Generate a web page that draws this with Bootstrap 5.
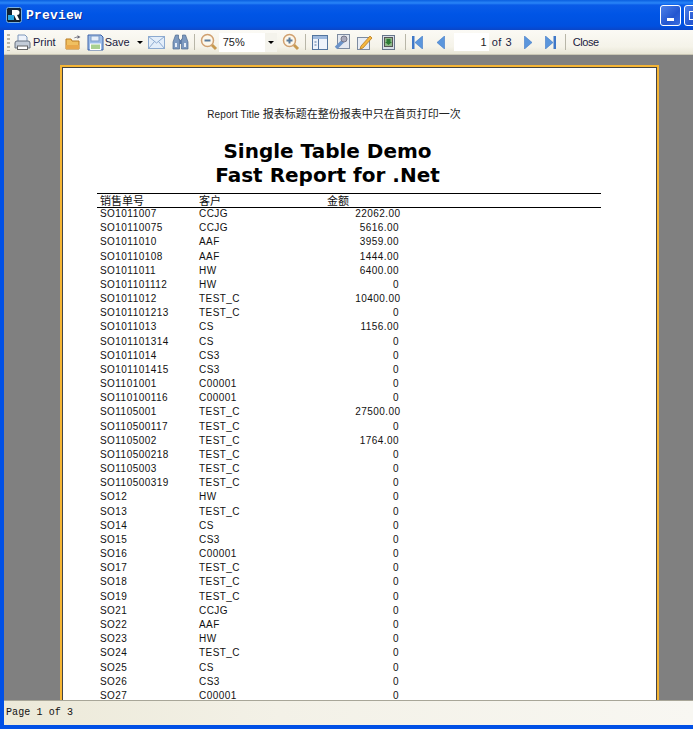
<!DOCTYPE html>
<html lang="en"><head><meta charset="utf-8"><title>Preview</title>
<link rel="stylesheet" href="https://cdn.jsdelivr.net/npm/bootstrap@5.3.0/dist/css/bootstrap.min.css">
<style>
html,body{height:100%;margin:0;overflow:hidden;background:#0047d8}
.win{height:729px;width:693px;display:flex;flex-direction:column;overflow:hidden;background:#0050e6}
.titlebar{height:30px;flex:none;background:linear-gradient(#0a5fe0 0,#2a86f8 3px,#0a5ce8 5px,#0055e6 14px,#0050e0 26px,#0a46c8 30px);padding-left:6px;gap:4px}
.logo{width:16px;height:16px;flex:none}
.wtitle{font:bold 13px "Liberation Mono",monospace;color:#fff;letter-spacing:.2px;text-shadow:1px 1px 0 #0a2a90}
.wbtns{margin-left:auto;gap:3px;margin-right:-12px}
.wbtn{width:21px;height:21px;border:1px solid #fff;border-radius:3px;background:linear-gradient(135deg,#4d80e8,#2356d0 60%,#3a6ee0)}
.frame{flex:1;min-height:0;display:flex;flex-direction:column;margin:0 0 4px 4px}
.tools{height:25px;flex:none;background:linear-gradient(#fbfaf5,#f5f3e9 70%,#e8e5d5);border-bottom:1px solid #c9c6b4;font:11px "Liberation Sans",sans-serif;color:#1a1a40;padding-left:3px}
.grip{width:3px;height:17px;background:repeating-linear-gradient(#b9b6a6 0 2px,transparent 2px 4px);margin-right:4px;flex:none}
.ic{display:block;flex:none}
.sep{width:1px;height:16px;background:#b8b6a8;flex:none}
.zoombox{width:58px;height:19px;background:#fff;padding-left:4px;line-height:19px;color:#222;font-size:11px;position:relative}
.zoombox b{position:absolute;right:0;top:0;bottom:0;width:12px;background:#f4f3ec}
.caret-dn{display:block;width:0;height:0;border:3px solid transparent;border-top:3px solid #000;border-bottom:0;flex:none}
.zoombox .caret-dn{position:absolute;right:3px;top:8px}
.pagebox{width:35px;height:18px;background:#fff;text-align:right;padding-right:2px;line-height:18px;color:#222}
.pagecount{letter-spacing:.5px;width:18px;white-space:nowrap}
.closer{letter-spacing:-.4px}
.g1{margin-left:1px}.g2{margin-left:2px}.g3{margin-left:3px}.g5{margin-left:5px}.g6{margin-left:6px}.g7{margin-left:7px}.g8{margin-left:8px}.g9{margin-left:9px}.g10{margin-left:10px}.g13{margin-left:13px}.g14{margin-left:14px}
.stage{flex:1;min-height:0;background:#808080;overflow:hidden;padding:10px 0 0 56px}
.sheet{width:599px;height:800px;background:#fff;border:2px solid #f5b535;outline:1px solid #444;outline-offset:-3px;padding:40px 56px 0 33px;font:10px/14.18px "Liberation Sans",sans-serif;color:#111;letter-spacing:.45px}
.rtitle{text-align:center;font:11px/14px "Liberation Sans","Noto Sans CJK SC",sans-serif;letter-spacing:0;width:474px;margin-left:2px;color:#222}
.rlatin{font-size:10px;letter-spacing:.1px}
.rhead{text-align:center;font:bold 20px/24px "DejaVu Sans",sans-serif;color:#000;letter-spacing:0;margin-top:17px;width:461px;margin-left:2px}
.hrow{display:flex;width:504px;margin-left:2px;border-top:1px solid #000;border-bottom:1px solid #000;height:15px;margin-top:6px;font:11px/13px "Noto Sans CJK SC",sans-serif;letter-spacing:0;padding-left:3px}
#rows{margin-top:-1px}
.drow{display:flex;width:504px;margin-left:2px;padding-left:3px;height:14.18px}
.c1{width:99px;flex:none}.c2{width:128px;flex:none}
.c3{width:72px;flex:none;text-align:right}
.wide{width:73.500px}
.status{height:25px;flex:none;background:linear-gradient(90deg,#ece9d8,#f3f1e7 40%,#f8f7f2);border-top:1px solid #a8a698;font:10px/24px "Liberation Mono",monospace;letter-spacing:.1px;color:#111;padding-left:2px}
</style></head><body>
<div class="win">
<div class="titlebar d-flex align-items-center">
<svg class="logo" viewBox="0 0 16 16"><rect x=".5" y=".5" width="15" height="15" rx="2" fill="#123" stroke="#7ab0e0"/><path d="M3 3h8q2.500 0 2.500 2.500T11 8l2.500 5H10.500L8 8H6V3z" fill="#fff"/><rect x="2" y="8" width="6" height="5" fill="#2aa5e0"/></svg>
<span class="wtitle">Preview</span>
<div class="wbtns d-flex"><span class="wbtn d-flex align-items-end justify-content-center pb-1"><svg width="8" height="3"><rect width="7" height="3" fill="#fff"/></svg></span><span class="wbtn d-flex align-items-center justify-content-center"><svg width="11" height="11"><rect x=".5" y="1.500" width="9" height="8" fill="none" stroke="#fff"/></svg></span></div>
</div>
<div class="frame">
<div class="tools d-flex align-items-center">
<span class="grip"></span>
<svg class="ic" width="17" height="17" viewBox="0 0 17 17"><path d="M4 1h7l2 2v6H4z" fill="#eef3fb" stroke="#7d97bb"/><path d="M1 9q0-2 2-2h11q2 0 2 2v5H1z" fill="#c3ccd8" stroke="#66707f"/><rect x="3.500" y="12" width="10" height="3.500" fill="#fff" stroke="#666"/></svg>
<span class="g2">Print</span>
<svg class="ic g9" width="17" height="17" viewBox="0 0 17 17"><path d="M1 5h5l1 2h7v8H1z" fill="#f0c060" stroke="#b87a20"/><path d="M1 11h13v4H1z" fill="#e9a84a"/><path d="M8 5q2-3 5-2.500L12 1l3.500 2L12 5l1-1.500q-3-.5-5 1.500z" fill="#667"/></svg>
<svg class="ic g5" width="17" height="17" viewBox="0 0 17 17"><path d="M1 1h13l2 2v13H1z" fill="#9cbce8" stroke="#3d62a8"/><rect x="4" y="2" width="8" height="5" fill="#e6eef9" stroke="#7c9bc8"/><rect x="3.500" y="10" width="10" height="5.500" fill="#a8d090" stroke="#fff"/></svg>
<span class="g1">Save</span>
<span class="caret-dn g7"></span>
<svg class="ic g5" width="17" height="13" viewBox="0 0 17 13"><rect x=".5" y=".5" width="16" height="12" fill="#e3eefa" stroke="#8caad0"/><path d="M.5.500l8 6.500 8-6.500M.5 12.500l6-7M16.500 12.500l-6-7" fill="none" stroke="#8caad0"/></svg>
<svg class="ic g7" width="17" height="16" viewBox="0 0 17 16"><path d="M3.500 1h3v4h1v10H1V8zM10.500 1h3l2.500 7v7H9.500V5h1z" fill="#7d9ac0" stroke="#4d6a90" stroke-width=".7"/><rect x="7.500" y="6" width="2" height="4" fill="#5a7aa8"/><path d="M3 9h2v4H3zM12 9h2v4h-2z" fill="#e6eef8"/></svg>
<span class="sep g5"></span>
<svg class="ic g5" width="18" height="18" viewBox="0 0 18 18"><circle cx="7.500" cy="7.500" r="6" fill="#fdf8ec" stroke="#d0a070" stroke-width="1.500"/><rect x="4.500" y="6.500" width="6" height="2" fill="#5a7a9a"/><path d="M12 12l4 4" stroke="#c89a50" stroke-width="3"/></svg>
<span class="zoombox g1">75%<b></b><span class="caret-dn"></span></span>
<svg class="ic g5" width="18" height="18" viewBox="0 0 18 18"><circle cx="7.500" cy="7.500" r="6" fill="#fdf8ec" stroke="#d0a070" stroke-width="1.500"/><path d="M4.500 6.500h2v-2h2v2h2v2h-2v2h-2v-2h-2z" fill="#5a7a9a"/><path d="M12 12l4 4" stroke="#c89a50" stroke-width="3"/></svg>
<span class="sep g5"></span>
<svg class="ic g6" width="16" height="15" viewBox="0 0 16 15"><rect x=".5" y=".5" width="15" height="14" fill="#eef3fa" stroke="#53759f"/><rect x="1" y="1" width="14" height="3" fill="#9db9de"/><path d="M6.500 4v10M2.500 7h2M2.500 10h2" stroke="#53759f"/></svg>
<svg class="ic g6" width="16" height="16" viewBox="0 0 16 16"><rect x="3.500" y=".5" width="12" height="14" fill="#e5e9f0" stroke="#7d8ba0"/><path d="M2 14l7-7" stroke="#6c93c8" stroke-width="3.500"/><circle cx="10" cy="5" r="3" fill="#aab" stroke="#778"/></svg>
<svg class="ic g7" width="16" height="16" viewBox="0 0 16 16"><rect x=".5" y="3.500" width="12" height="12" fill="#e8edf5" stroke="#7d8ba0"/><path d="M4 12L13 2l2 2-9 10-3 1z" fill="#f5b840" stroke="#b87a20" stroke-width=".8"/></svg>
<svg class="ic g9" width="13" height="15" viewBox="0 0 13 15"><rect x=".5" y=".5" width="12" height="14" fill="#d9dfe8" stroke="#67758a"/><rect x="2.500" y="2.500" width="8" height="9" fill="#8fb98a" stroke="#555"/><path d="M4.500 4h4v3h1.500L6.500 10 3 7h1.500z" fill="#2d7a35"/></svg>
<span class="sep g10"></span>
<svg class="ic g6" width="11" height="13" viewBox="0 0 11 13"><rect width="2.500" height="13" fill="#3f78c8"/><path d="M10.500 0v13L3 6.500z" fill="#5b96dc" stroke="#3f78c8" stroke-width=".6"/></svg>
<svg class="ic g14" width="8" height="13" viewBox="0 0 8 13"><path d="M7.500 0v13L0 6.500z" fill="#5b96dc" stroke="#3f78c8" stroke-width=".6"/></svg>
<span class="pagebox g9">1</span><span class="g3 pagecount">of 3</span>
<svg class="ic g14" width="8" height="13" viewBox="0 0 8 13"><path d="M.5 0v13L8 6.500z" fill="#5b96dc" stroke="#3f78c8" stroke-width=".6"/></svg>
<svg class="ic g13" width="11" height="13" viewBox="0 0 11 13"><path d="M.5 0v13L8 6.500z" fill="#5b96dc" stroke="#3f78c8" stroke-width=".6"/><rect x="8.500" width="2.500" height="13" fill="#3f78c8"/></svg>
<span class="sep g9"></span>
<span class="g7 closer">Close</span>
</div>
<div class="stage">
<div class="sheet">
<div class="rtitle"><span class="rlatin">Report Title</span> 报表标题在整份报表中只在首页打印一次</div>
<div class="rhead">Single Table Demo<br>Fast Report for .Net</div>
<div class="hrow"><span class="c1">销售单号</span><span class="c2">客户</span><span>金额</span></div>
<div id="rows"></div>
</div></div>
<div class="status">Page 1 of 3</div>
</div></div>
<script>
const d=`SO1011007|CCJG|22062.00
SO10110075|CCJG|5616.00
SO1011010|AAF|3959.00
SO10110108|AAF|1444.00
SO1011011|HW|6400.00
SO101101112|HW|0
SO1011012|TEST_C|10400.00
SO101101213|TEST_C|0
SO1011013|CS|1156.00
SO101101314|CS|0
SO1011014|CS3|0
SO101101415|CS3|0
SO1101001|C00001|0
SO110100116|C00001|0
SO1105001|TEST_C|27500.00
SO110500117|TEST_C|0
SO1105002|TEST_C|1764.00
SO110500218|TEST_C|0
SO1105003|TEST_C|0
SO110500319|TEST_C|0
SO12|HW|0
SO13|TEST_C|0
SO14|CS|0
SO15|CS3|0
SO16|C00001|0
SO17|TEST_C|0
SO18|TEST_C|0
SO19|TEST_C|0
SO21|CCJG|0
SO22|AAF|0
SO23|HW|0
SO24|TEST_C|0
SO25|CS|0
SO26|CS3|0
SO27|C00001|0`.split('\n');
document.getElementById('rows').innerHTML=d.map(l=>{const p=l.split('|');return `<div class="drow"><span class="c1">${p[0]}</span><span class="c2">${p[1]}</span><span class="c3${p[2].length>7?' wide':''}">${p[2]}</span></div>`}).join('');
</script>
<script src="https://cdn.jsdelivr.net/npm/bootstrap@5.3.0/dist/js/bootstrap.bundle.min.js"></script>
</body></html>
